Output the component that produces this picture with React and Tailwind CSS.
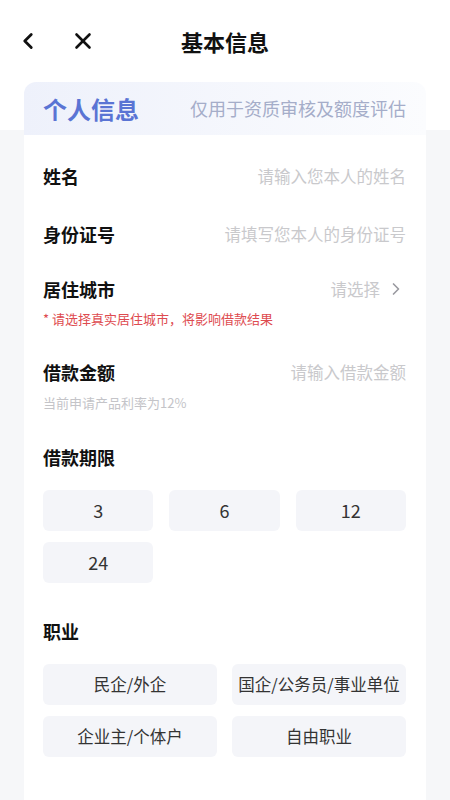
import { ChevronLeft, X, ChevronRight } from "lucide-react";

const font = { fontFamily: '"Noto Sans CJK SC", "Noto Sans", sans-serif' };

function Row({ label, placeholder, arrow, className }) {
  return (
    <div className={`flex items-center justify-between h-[44px] ${className}`}>
      <span className="text-[18px] font-bold text-[#111]">{label}</span>
      <span className="flex items-center text-[16.5px] text-[#c9c9cc]">
        {placeholder}
        {arrow && <ChevronRight size={20} strokeWidth={2} className="ml-[6px] text-[#9a9aa0]" />}
      </span>
    </div>
  );
}

export default function App() {
  const periods = ["3", "6", "12", "24"];
  const jobs = ["民企/外企", "国企/公务员/事业单位", "企业主/个体户", "自由职业"];

  return (
    <div style={font} className="w-[450px] min-h-[800px] bg-[linear-gradient(to_bottom,#ffffff_130px,#f6f7f9_130px)]">
      {/* Nav */}
      <div className="relative h-[82px] flex items-center">
        <ChevronLeft size={26} strokeWidth={2.6} className="ml-[15px] text-[#111]" />
        <X size={26} strokeWidth={2.4} className="ml-[29px] text-[#111]" />
        <h1 className="absolute left-0 right-0 text-center text-[22px] font-bold text-[#111] pointer-events-none">基本信息</h1>
      </div>

      {/* Card */}
      <div className="mx-6 bg-white rounded-t-xl min-h-[718px]">
        <div className="h-[53px] rounded-t-xl bg-[linear-gradient(to_right,#eef1fb,#fbfcfe)] flex items-center justify-between pl-[19px] pr-[20px]">
          <span className="text-[24px] font-bold text-[#5a74d4]">个人信息</span>
          <span className="text-[18px] text-[#a5adc9]">仅用于资质审核及额度评估</span>
        </div>

        <div className="pl-[19px] pr-[20px]">
          <Row label="姓名" placeholder="请输入您本人的姓名" className="mt-[19px]" />
          <Row label="身份证号" placeholder="请填写您本人的身份证号" className="mt-[14px]" />
          <Row label="居住城市" placeholder="请选择" arrow className="mt-[11px]" />
          <p className="text-[13px] text-[#de4b50] -mt-px leading-[18px]">* 请选择真实居住城市，将影响借款结果</p>

          <Row label="借款金额" placeholder="请输入借款金额" className="mt-[22px]" />
          <p className="text-[13px] text-[#c4c4c8] leading-[18px]">当前申请产品利率为12%</p>

          <div className="mt-[23px] h-[44px] flex items-center text-[18px] font-bold text-[#111]">借款期限</div>
          <div className="grid grid-cols-3 gap-x-[16px] gap-y-[11px] mt-[11px]">
            {periods.map((p) => (
              <div key={p} className="h-[41px] rounded-md bg-[#f4f5f9] flex items-center justify-center text-[18px] text-[#333]">
                {p}
              </div>
            ))}
          </div>

          <div className="mt-[26px] h-[44px] flex items-center text-[18px] font-bold text-[#111]">职业</div>
          <div className="grid grid-cols-2 gap-x-[15px] gap-y-[11px] mt-[11px]">
            {jobs.map((j) => (
              <div key={j} className="h-[41px] rounded-md bg-[#f4f5f9] flex items-center justify-center text-[16.5px] text-[#333] whitespace-nowrap">
                {j}
              </div>
            ))}
          </div>
        </div>
      </div>
    </div>
  );
}
